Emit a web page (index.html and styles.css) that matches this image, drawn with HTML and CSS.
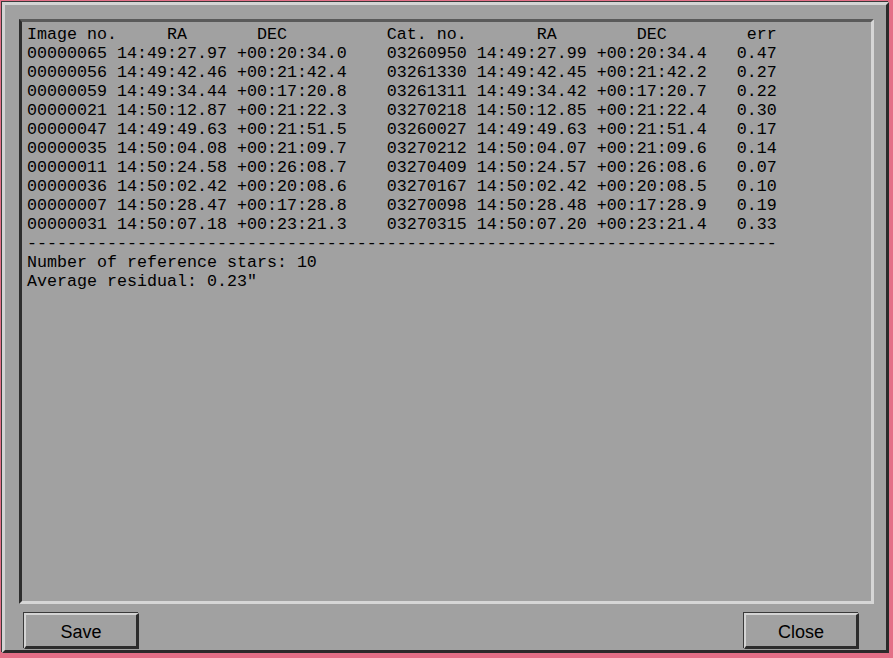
FILE: index.html
```html
<!DOCTYPE html>
<html>
<head>
<meta charset="utf-8">
<link rel="stylesheet" href="styles.css">
</head>
<body>
<div class="window">
  <div class="textarea"><pre class="text">Image no.     RA       DEC          Cat. no.       RA        DEC        err
00000065 14:49:27.97 +00:20:34.0    03260950 14:49:27.99 +00:20:34.4   0.47
00000056 14:49:42.46 +00:21:42.4    03261330 14:49:42.45 +00:21:42.2   0.27
00000059 14:49:34.44 +00:17:20.8    03261311 14:49:34.42 +00:17:20.7   0.22
00000021 14:50:12.87 +00:21:22.3    03270218 14:50:12.85 +00:21:22.4   0.30
00000047 14:49:49.63 +00:21:51.5    03260027 14:49:49.63 +00:21:51.4   0.17
00000035 14:50:04.08 +00:21:09.7    03270212 14:50:04.07 +00:21:09.6   0.14
00000011 14:50:24.58 +00:26:08.7    03270409 14:50:24.57 +00:26:08.6   0.07
00000036 14:50:02.42 +00:20:08.6    03270167 14:50:02.42 +00:20:08.5   0.10
00000007 14:50:28.47 +00:17:28.8    03270098 14:50:28.48 +00:17:28.9   0.19
00000031 14:50:07.18 +00:23:21.3    03270315 14:50:07.20 +00:23:21.4   0.33
---------------------------------------------------------------------------
Number of reference stars: 10
Average residual: 0.23"</pre></div>
  <div class="buttons">
    <button class="btn">Save</button>
    <button class="btn">Close</button>
  </div>
</div>
</body>
</html>
```
FILE: styles.css
```css
html, body {
  margin: 0;
  padding: 0;
}
body {
  width: 893px;
  height: 658px;
  background: #e36f87;
  overflow: hidden;
}
.window {
  box-sizing: border-box;
  width: 887px;
  height: 651px;
  margin: 2px 0 0 2px;
  border: 3px solid;
  border-color: #d4d4d4 #2a2a2a #2a2a2a #d4d4d4;
  box-shadow: -1px -1px 0 #3a3a3a;
  background: #a1a1a1;
  display: flex;
  flex-direction: column;
  padding: 14px 12px 1px 14px;
}
.textarea {
  flex: 1;
  box-sizing: border-box;
  border: 3px solid;
  border-color: #5a5a5a #d6d6d6 #d6d6d6 #2c2c2c;
  background: #a1a1a1;
  overflow: hidden;
}
.text {
  margin: 0;
  padding: 3px 5px 0 5px;
  font-family: "Liberation Mono", "Courier New", monospace;
  font-size: 16.667px;
  line-height: 19px;
  color: #000;
}
.buttons {
  margin-top: 9px;
  height: 36px;
  display: flex;
  justify-content: space-between;
  padding: 0 15px 0 5px;
}
.btn {
  box-sizing: border-box;
  width: 115px;
  height: 36px;
  margin: 0;
  padding: 3px 0 0 0;
  background: #a1a1a1;
  border: 3px solid;
  border-color: #d4d4d4 #2c2c2c #2c2c2c #d4d4d4;
  border-top-width: 2px;
  border-left-width: 2px;
  box-shadow: -1px -1px 0 #3a3a3a;
  font-family: "Liberation Sans", Arial, sans-serif;
  font-size: 18px;
  color: #000;
}
```
